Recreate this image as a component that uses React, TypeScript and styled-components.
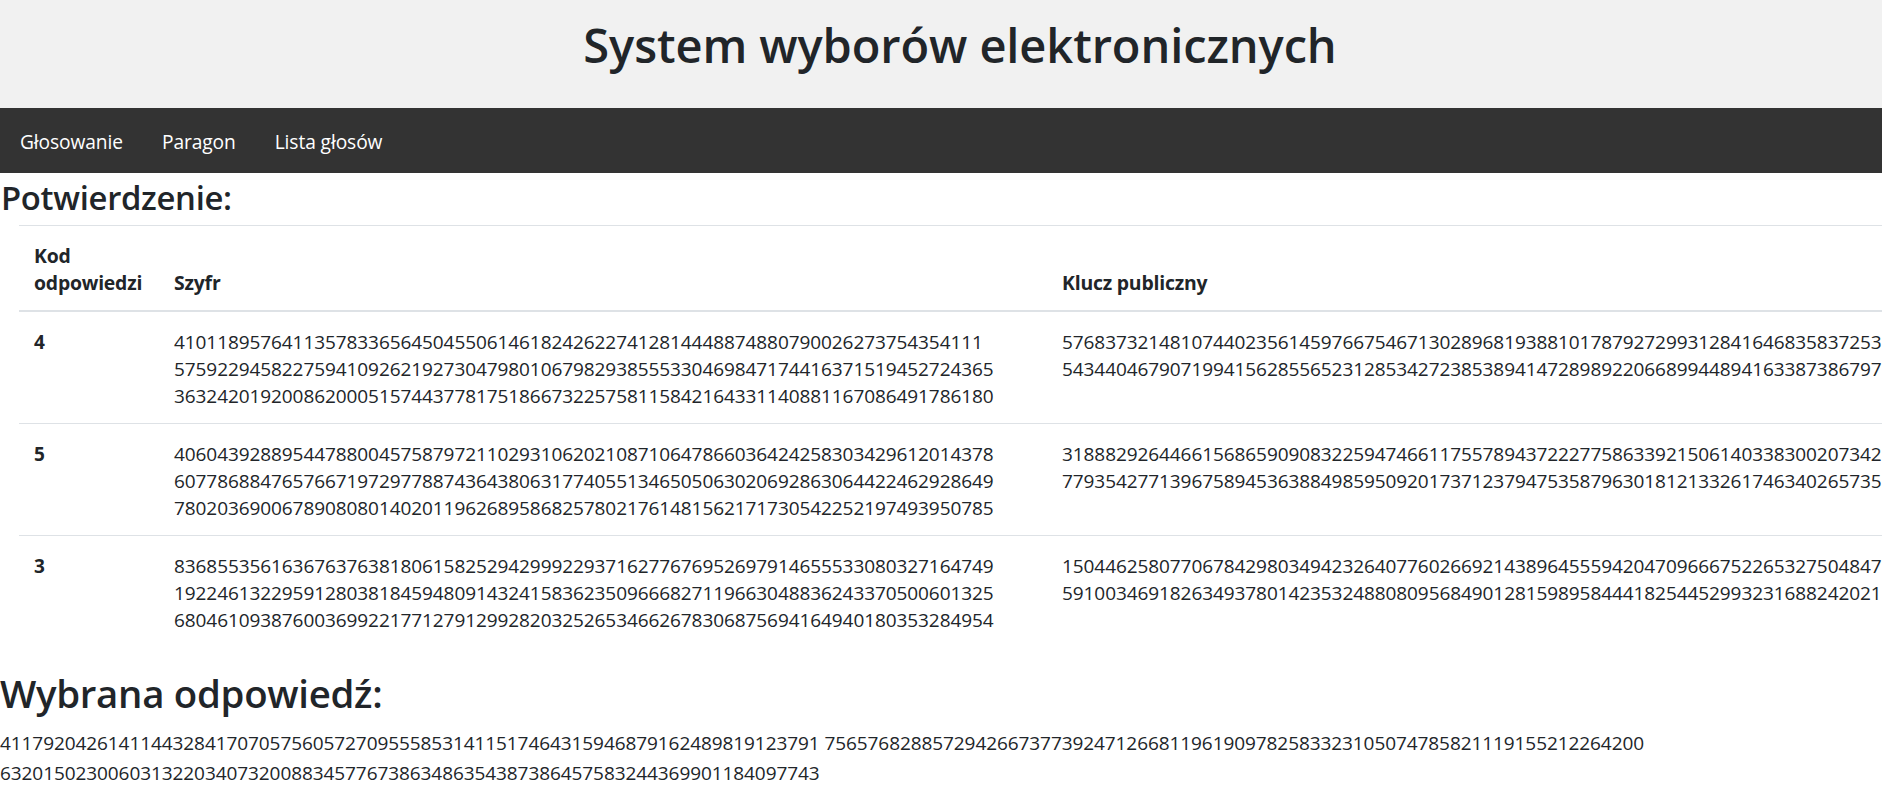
import React from "react";
import styled, { createGlobalStyle } from "styled-components";

const Global = createGlobalStyle`
  html, body { margin: 0; padding: 0; background: #fff; overflow-x: hidden; }
  body { font-family: "Open Sans", "Noto Sans", "Liberation Sans", sans-serif; color: #212529; }
`;
const Page = styled.div`width: 1882px; overflow: hidden;`;
const Header = styled.header`
  height: 108px; padding: 0 0 18px 38px; box-sizing: border-box; background: #f1f1f1;
  display: flex; align-items: center; justify-content: center;
`;
const Title = styled.h1`
  margin: 0; font-size: 47px; line-height: 60px; font-weight: 600; letter-spacing: -0.1px;
`;
const Nav = styled.nav`height: 65px; background: #333; display: flex; align-items: center; gap: 39px; padding: 2px 0 0 20px; box-sizing: border-box;`;
const NavLink = styled.a`
  color: #fff; font-size: 19.2px; line-height: 27px; letter-spacing: -0.1px;
`;
const SectionTitle = styled.h2`
  margin: 0; padding-left: 1px; font-size: 32.8px; line-height: 52px; font-weight: 600; letter-spacing: -0.3px;
  position: relative; top: -1px;
`;
const TableWrap = styled.div`padding-left: 20px;`;
const Table = styled.table`
  width: 2080px; margin-left: -1px; table-layout: fixed; border-collapse: collapse; font-size: 19px; line-height: 27px;
`;
const Th = styled.th<{ $w: number }>`
  width: ${(p) => p.$w}px; text-align: left; vertical-align: bottom; padding: 16px 15px 14px;
  font-weight: 700; font-size: 19.4px; letter-spacing: -0.2px; box-sizing: border-box;
  border-top: 1px solid #dee2e6; border-bottom: 2px solid #dee2e6;
  &:first-child { padding-right: 0; }
`;
const Td = styled.td<{ $bold?: boolean }>`
  vertical-align: top; padding: 17px 15px 13px; letter-spacing: -0.08px;
  font-weight: ${(p) => (p.$bold ? 700 : 400)};
  border-top: 1px solid #dee2e6;
`;
const Row = styled.tr`&:first-child td { border-top: 0; }`;
const Chosen = styled.section`padding-top: 16px;`;
const ChosenTitle = styled.h1`
  margin: 0; font-size: 38.4px; line-height: 60px; font-weight: 600; letter-spacing: -0.3px;
`;
const ChosenText = styled.p`
  margin: 5px 0 0; font-size: 19px; line-height: 30px; letter-spacing: -0.08px;
`;

const rows = [
  {
    code: "4",
    cipher: "410118957641135783365645045506146182426227412814448874880790026273754354111 5759229458227594109262192730479801067982938555330469847174416371519452724365 3632420192008620005157443778175186673225758115842164331140881167086491786180",
    key: "57683732148107440235614597667546713028968193881017879272993128416468358372531 54344046790719941562855652312853427238538941472898922066899448941633873867971",
  },
  {
    code: "5",
    cipher: "4060439288954478800457587972110293106202108710647866036424258303429612014378 6077868847657667197297788743643806317740551346505063020692863064422462928649 7802036900678908080140201196268958682578021761481562171730542252197493950785",
    key: "31888292644661568659090832259474661175578943722277586339215061403383002073421 77935427713967589453638849859509201737123794753587963018121332617463402657351",
  },
  {
    code: "3",
    cipher: "8368553561636763763818061582529429992293716277676952697914655533080327164749 1922461322959128038184594809143241583623509666827119663048836243370500601325 6804610938760036992217712791299282032526534662678306875694164940180353284954",
    key: "15044625807706784298034942326407760266921438964555942047096667522653275048471 59100346918263493780142353248808095684901281598958444182544529932316882420211",
  },
];

export default function App() {
  return (
    <Page>
      <Global />
      <Header><Title>System wyborów elektronicznych</Title></Header>
      <Nav>
        <NavLink>Głosowanie</NavLink>
        <NavLink>Paragon</NavLink>
        <NavLink>Lista głosów</NavLink>
      </Nav>
      <SectionTitle>Potwierdzenie:</SectionTitle>
      <TableWrap>
        <Table>
          <thead>
            <tr>
              <Th $w={140}>Kod odpowiedzi</Th>
              <Th $w={888}>Szyfr</Th>
              <Th $w={1052}>Klucz publiczny</Th>
            </tr>
          </thead>
          <tbody>
            {rows.map((r) => (
              <Row key={r.code}>
                <Td $bold>{r.code}</Td>
                <Td>{r.cipher}</Td>
                <Td>{r.key}</Td>
              </Row>
            ))}
          </tbody>
        </Table>
      </TableWrap>
      <Chosen>
        <ChosenTitle>Wybrana odpowiedź:</ChosenTitle>
        <ChosenText>
          4117920426141144328417070575605727095558531411517464315946879162489819123791 7565768288572942667377392471266811961909782583323105074785821119155212264200 6320150230060313220340732008834577673863486354387386457583244369901184097743
        </ChosenText>
      </Chosen>
    </Page>
  );
}
